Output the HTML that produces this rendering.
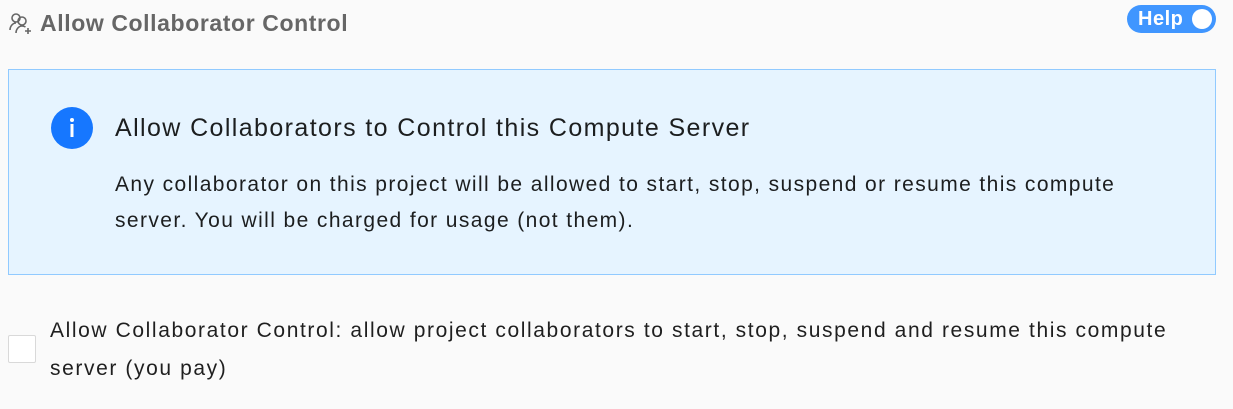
<!DOCTYPE html>
<html><head><meta charset="utf-8"><style>
*{margin:0;padding:0;box-sizing:border-box}
body{width:1233px;height:409px;background:#fafafa;font-family:"Liberation Sans",sans-serif;position:relative;overflow:hidden;color:#333}
.hdr{position:absolute;left:40px;top:9px;font-size:23px;font-weight:bold;color:#666;line-height:28px;letter-spacing:0.6px}
.hicon{position:absolute;left:9px;top:12px}
.toggle{position:absolute;left:1127px;top:5px;width:89px;height:28px;border-radius:14px;background:#4096ff}
.toggle span{position:absolute;left:11px;top:3px;color:#fff;font-weight:bold;font-size:20px;line-height:22px;letter-spacing:.5px}
.toggle i{position:absolute;right:4px;top:4px;width:20px;height:20px;border-radius:50%;background:#fff}
.alert{position:absolute;left:8px;top:69px;width:1208px;height:206px;background:#e6f4ff;border:1px solid #91caff}
.ic{position:absolute;left:51px;top:107px;width:42px;height:42px;border-radius:50%;background:#1677ff}
.at{position:absolute;left:115px;top:113px;font-size:25px;line-height:30px;color:rgba(0,0,0,.88);letter-spacing:1.4px}
.ad{position:absolute;left:115px;top:167px;width:1040px;font-size:21px;line-height:36px;color:rgba(0,0,0,.88);letter-spacing:1.4px}
.cb{position:absolute;left:8px;top:335px;width:28px;height:28px;background:#fff;border:1px solid #d9d9d9;border-radius:2px}
.ct{position:absolute;left:50px;top:312px;width:1140px;font-size:21px;line-height:38px;color:rgba(0,0,0,.88);letter-spacing:1.6px}
</style></head><body>
<svg class="hicon" width="24" height="24" viewBox="0 0 24 24" fill="none" stroke="#666" stroke-width="1.6">
<circle cx="7" cy="6" r="4"/><path d="M1 18c0-4 3-7 6-7"/><circle cx="13" cy="9" r="4"/><path d="M7 21c0-4 3-7 6-7 1.5 0 2.5.4 3.5 1"/><path d="M19 16v6M16 19h6"/></svg>
<div class="hdr">Allow Collaborator Control</div>
<div class="toggle"><span>Help</span><i></i></div>
<div class="alert"></div>
<div class="ic"><svg width="42" height="42" viewBox="0 0 42 42"><circle cx="21" cy="13" r="2" fill="#fff"/><rect x="19.5" y="17" width="3" height="13" fill="#fff"/></svg></div>
<div class="at">Allow Collaborators to Control this Compute Server</div>
<div class="ad">Any collaborator on this project will be allowed to start, stop, suspend or resume this compute server. You will be charged for usage (not them).</div>
<div class="cb"></div>
<div class="ct">Allow Collaborator Control: allow project collaborators to start, stop, suspend and resume this compute server (you pay)</div>
</body></html>
